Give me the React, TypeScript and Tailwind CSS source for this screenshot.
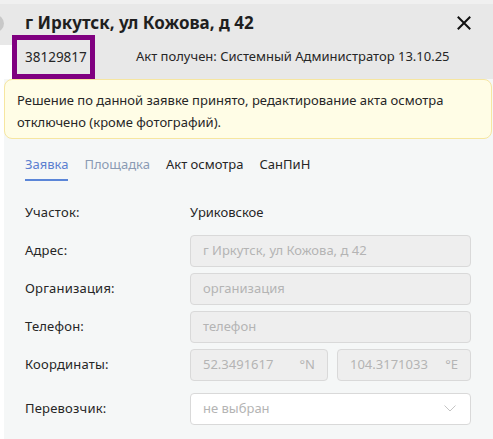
import React from 'react';

const font = { fontFamily: '"Noto Sans", "Open Sans", sans-serif' };

const Field = ({ label, children, className = '' }: { label: string; children: React.ReactNode; className?: string }) => (
  <div className={`flex items-center h-[32px] ${className}`}>
    <div className="w-[165px] shrink-0 text-[13px] text-[#262626] tracking-[0.2px]">{label}</div>
    <div className="flex-1 flex gap-[9px]">{children}</div>
  </div>
);

const Disabled = ({ value, suffix, className = 'flex-1' }: { value: string; suffix?: string; className?: string }) => (
  <div className={`${className} h-[32px] flex items-center justify-between px-[12px] rounded-[4px] border border-[#d9d9d9] bg-[#eeeeee] text-[13px] text-[#b4b4b4]`}>
    <span>{value}</span>
    {suffix && <span>{suffix}</span>}
  </div>
);

const App = () => {
  return (
    <div className="w-[493px] h-[439px] overflow-hidden bg-white relative" style={font}>
      <div className="absolute left-[-13px] top-[15px] w-[17px] h-[17px] rounded-full bg-[#c8c8c8]" />
      <div className="h-[4px] bg-[#f0f0f0]" />
      <div className="bg-[#e8e8e8]">
        <div className="flex items-center justify-between h-[31px] pl-[25px] pr-[22px]">
          <span className="text-[17px] font-bold text-[#1f1f1f] leading-none pt-[6px]">г Иркутск, ул Кожова, д 42</span>
          <svg width="14" height="14" viewBox="0 0 14 14" className="mt-[6px]">
            <path d="M1.5 1.5 L12.5 12.5 M12.5 1.5 L1.5 12.5" stroke="#111" strokeWidth="2" strokeLinecap="square" />
          </svg>
        </div>
        <div className="flex items-stretch h-[44px]">
          <div className="w-[12px] mt-[10px] bg-white" />
          <div className="w-[83px] border-[5px] border-[#800080] flex items-center pl-[8px] text-[13.5px] text-[#262626]">38129817</div>
          <div className="flex items-center pl-[41px] text-[13px] text-[#262626]">Акт получен: Системный Администратор 13.10.25</div>
        </div>
      </div>
      <div className="pl-[4px] bg-white">
        <div className="bg-[#f5f7f7] h-[360px]">
          <div className="mr-[1px] h-[60px] rounded-[8px] border border-[#f6e6a0] bg-[#fffde6] px-[12px] pt-[9px] text-[13px] leading-[22px] text-[#262626]">
            Решение по данной заявке принято, редактирование акта осмотра отключено (кроме фотографий).
          </div>
          <div className="flex gap-[16px] pl-[21px] mt-[16px] text-[13px]">
            <div className="pb-[4px] border-b-2 border-[#5b86d8] text-[#5b7fd0]">Заявка</div>
            <div className="pb-[4px] text-[#8b9bb4]">Площадка</div>
            <div className="pb-[4px] text-[#262626]">Акт осмотра</div>
            <div className="pb-[4px] text-[#262626]">СанПиН</div>
          </div>
          <div className="pl-[21px] pr-[22px] mt-[16px] flex flex-col gap-[6px]">
            <Field label="Участок:">
              <span className="text-[13px] text-[#262626]">Уриковское</span>
            </Field>
            <Field label="Адрес:">
              <Disabled value="г Иркутск, ул Кожова, д 42" />
            </Field>
            <Field label="Организация:">
              <Disabled value="организация" />
            </Field>
            <Field label="Телефон:">
              <Disabled value="телефон" />
            </Field>
            <Field label="Координаты:">
              <Disabled value="52.3491617" suffix="°N" className="w-[138px]" />
              <Disabled value="104.3171033" suffix="°E" className="flex-1" />
            </Field>
            <Field label="Перевозчик:" className="mt-[6px]">
              <div className="flex-1 h-[32px] flex items-center justify-between pl-[12px] pr-[14px] rounded-[4px] border border-[#d9d9d9] bg-white text-[13px] text-[#b4b4b4]">
                <span>не выбран</span>
                <svg width="12" height="7" viewBox="0 0 12 7">
                  <path d="M0.5 0.5 L6 6 L11.5 0.5" fill="none" stroke="#c4c4c4" strokeWidth="1" />
                </svg>
              </div>
            </Field>
          </div>
        </div>
      </div>
    </div>
  );
};

export default App;
